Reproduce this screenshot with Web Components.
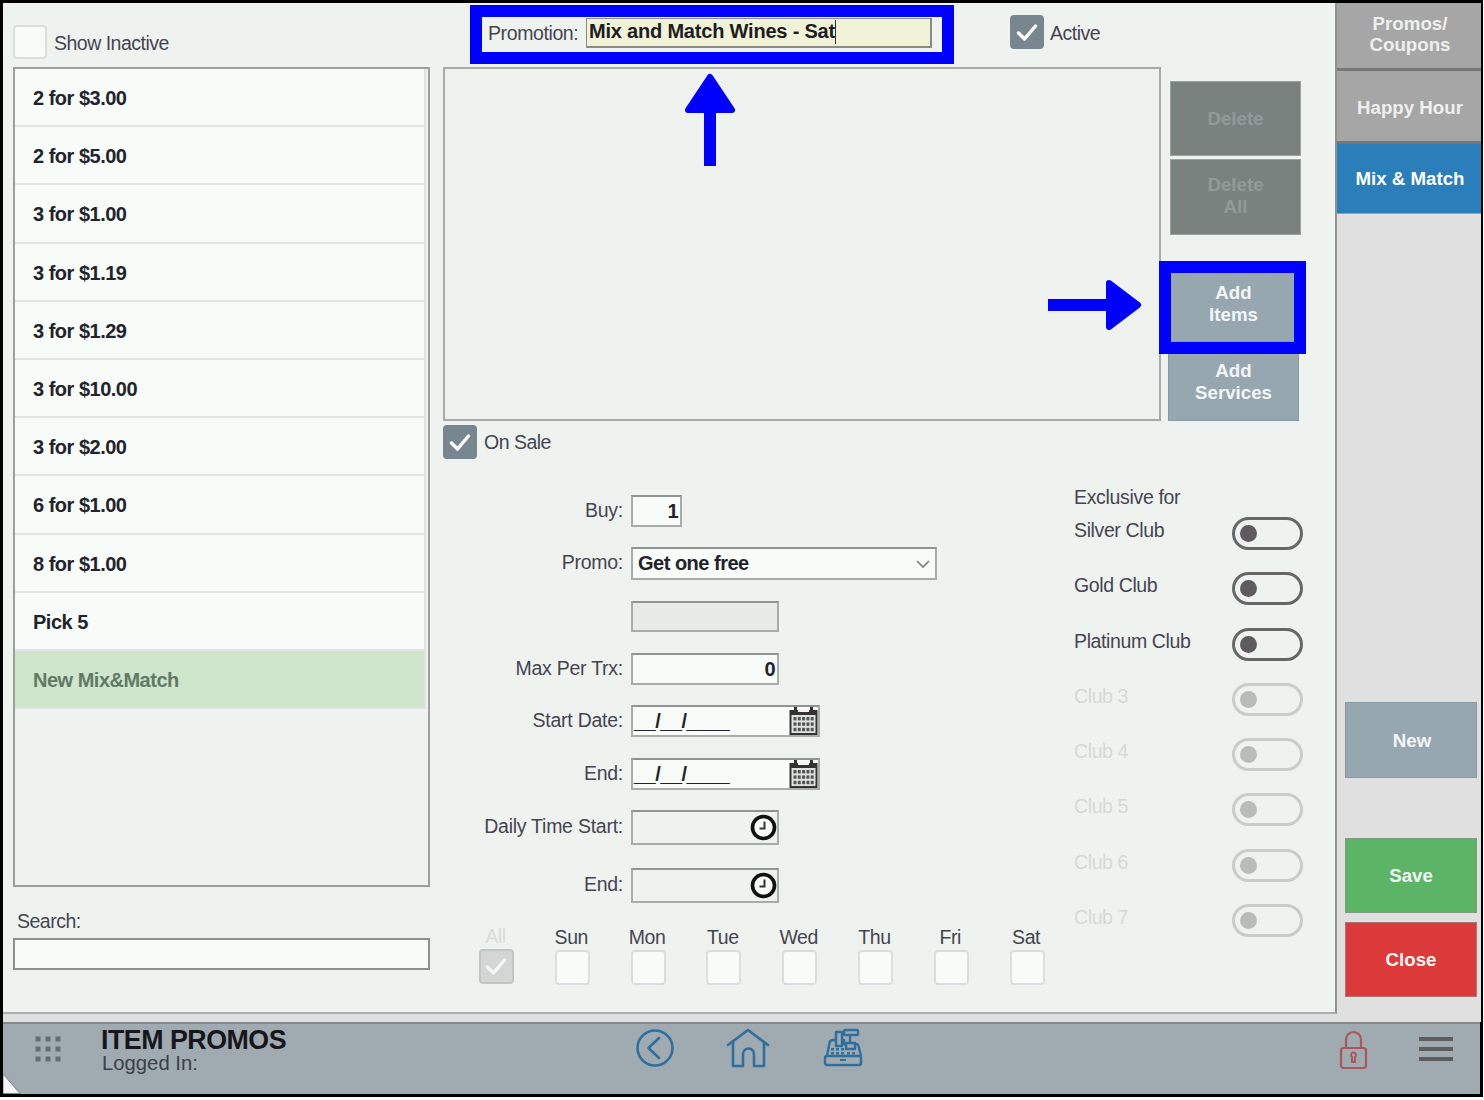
<!DOCTYPE html>
<html><head><meta charset="utf-8"><title>Item Promos</title>
<style>html,body{margin:0;padding:0;background:#fff}</style></head>
<body><promo-app></promo-app>
<script>
const FONT='"Liberation Sans",Arial,sans-serif';
const def=(name,css,html,init)=>customElements.define(name,class extends HTMLElement{
  constructor(){super();this.attachShadow({mode:'open'}).innerHTML='<style>'+css+'</style>'+html;}
  connectedCallback(){if(init)init(this);}
});
const CHECK='<svg viewBox="0 0 34 34" width="34" height="34"><path d="M8.5 18 L14.5 24 L25.5 11" fill="none" stroke="currentColor" stroke-width="3.4" stroke-linecap="round" stroke-linejoin="round"/></svg>';

def('check-box',`:host{display:flex;align-items:center;font:19.5px ${FONT};letter-spacing:-.5px;color:#454550}
 b{display:block;box-sizing:border-box;width:var(--s,34px);height:var(--s,34px);border-radius:4px;background:#f8fcf9;border:2px solid #d9dfdf;flex:none}
 b svg{display:none;margin:-2px}
 :host([on]) b{background:#78878f;border-color:#78878f;color:#fff}
 :host([on]) b svg{display:block}
 :host([muted]) b{background:#d3d6d5;border-color:#c0c5c5;color:#f6f6f6}
 :host([muted]) b svg{display:block}
 span{margin-left:var(--sp,7px);position:relative;top:var(--ty,0)}
 :host([bare]) span{display:none}`,`<b>${CHECK}</b><span><slot></slot></span>`);

def('list-row',`:host{display:flex;align-items:center;box-sizing:border-box;height:58.2px;padding:3px 0 0 18px;border-bottom:2px solid #e2e5e3;background:#f8fcf9;font:bold 20px ${FONT};letter-spacing:-.5px;color:#23232b}
 :host([sel]){background:#cfe5cc;color:#607a66}`,`<slot></slot>`);

def('list-panel',`:host{display:block;box-sizing:border-box;width:417px;height:820px;margin-top:8px;border:2px solid #9c9f9d;padding-right:2px}
 div{border-right:2px solid #dfe2e0}`,`<div><slot></slot></div>`);

def('left-column',`:host{display:flex;flex-direction:column;width:417px;margin-left:10px;padding-top:22px;flex:none}
 label{display:block;margin:24px 0 6px 4px;font:19.5px/21px ${FONT};letter-spacing:-.5px;color:#454550}
 i{display:block;box-sizing:border-box;height:32px;border:2px solid #8c908e;background:#f8fcf9}
 check-box{--ty:1px}`,
 `<check-box>Show Inactive</check-box><list-panel>
 <list-row>2 for $3.00</list-row><list-row>2 for $5.00</list-row><list-row>3 for $1.00</list-row><list-row>3 for $1.19</list-row><list-row>3 for $1.29</list-row><list-row>3 for $10.00</list-row><list-row>3 for $2.00</list-row><list-row>6 for $1.00</list-row><list-row>8 for $1.00</list-row><list-row>Pick 5</list-row><list-row sel>New Mix&amp;Match</list-row>
 </list-panel><label>Search:</label><i></i>`);

def('promo-header',`:host{display:flex;height:64px;padding-top:15px;box-sizing:border-box;font:19.5px ${FONT};color:#454550}
 .lab{width:98px;margin-left:45px;height:30px;line-height:31px;flex:none;letter-spacing:-.4px}
 .inp{box-sizing:border-box;width:346px;height:30px;background:#f0f3d8;border:1px solid #8a8c80;border-bottom-width:2px;border-right-width:2px;font:bold 20px/24px ${FONT};letter-spacing:-.2px;color:#1d1d22;padding-left:2px;flex:none}
 .inp u{display:inline-block;width:1.5px;height:24px;background:#333;vertical-align:-6px}
 check-box{margin:-3px 0 0 78px;height:34px;--ty:1px;--sp:6px}`,
 `<span class="lab">Promotion:</span><span class="inp">Mix and Match Wines - Sat<u></u></span><check-box on>Active</check-box>`);

def('soft-button',`:host{display:flex;align-items:center;justify-content:center;box-sizing:border-box;text-align:center;width:var(--w,131px);height:var(--h,75px);background:var(--bg,#97a7af);border:1px solid var(--bd,#8a9aa2);color:var(--fg,#f3f6f6);font:bold 18.7px/22px ${FONT};padding-bottom:var(--pb,0)}`,`<div><slot></slot></div>`);

def('item-area',`:host{display:flex;height:354px}
 .box{box-sizing:border-box;width:718px;height:354px;border:2px solid #a9aba9;flex:none}
 .btns{display:flex;flex-direction:column;margin-left:7px;padding-top:14px}
 .del{--bg:#7a8280;--bd:#9ea3a1;--fg:#929a98;margin-left:2px;margin-bottom:3px;height:75px}
 .d2{height:76px;--pb:2px}
 .add{margin-top:30px;height:77px;--pb:0px}
 .svc{margin-top:4px;height:75px;--pb:3px}`,
 `<div class="box"></div><div class="btns"><soft-button class="del">Delete</soft-button><soft-button class="del d2" style="margin-bottom:0">Delete<br>All</soft-button><soft-button class="add">Add<br>Items</soft-button><soft-button class="svc">Add<br>Services</soft-button></div>`);

def('form-row',`:host{display:flex;height:var(--h,32px);margin-bottom:var(--g,21px);font:19.5px ${FONT};letter-spacing:-.25px;color:#454550}
 .l{width:180px;text-align:right;flex:none;line-height:var(--h,32px);margin-top:-1px}
 .f{margin-left:8px;position:relative}`,`<div class="l"><slot name="label"></slot></div><div class="f"><slot></slot></div>`);

def('field-box',`:host{display:flex;align-items:center;box-sizing:border-box;height:100%;width:var(--w,148px);border:2px solid #a8acaa;border-top-color:#8f9391;background:var(--bg,#f8fcf9);font:bold 20px ${FONT};letter-spacing:-.5px;color:#23232b;padding:0 4px 0 5px}
 :host([num]){justify-content:flex-end;padding-right:2px}
 :host([icon]){justify-content:space-between;padding:0 0 0 1px}`,`<slot></slot>`);

const dots=()=>{let s='';for(let r=0;r<3;r++)for(let c=0;c<5;c++)s+=`<rect x="${4.5+c*4.3}" y="${10+r*5.4}" width="3" height="3.4"/>`;return s;};
def('cal-icon',`:host{display:block;flex:none;width:29px;height:28px}svg{display:block}`,
 `<svg viewBox="0 0 29 28" width="29" height="28"><rect x="0.5" y="3" width="28" height="25" fill="#333"/><rect x="5" y="0" width="3" height="6" fill="#333"/><rect x="21" y="0" width="3" height="6" fill="#333"/><rect x="9" y="2" width="11" height="3" fill="#f5f5f5"/><rect x="2.5" y="8" width="24" height="18" fill="#dfe2e1"/><g fill="#555">${dots()}</g></svg>`);

def('clock-icon',`:host{display:block;flex:none;width:27px;height:27px}svg{display:block}`,
 `<svg viewBox="0 0 27 27" width="27" height="27"><circle cx="13.5" cy="13.5" r="11" fill="#f8fbf8" stroke="#111" stroke-width="3.6"/><path d="M14.5 7.5V14.5H9.500" fill="none" stroke="#333" stroke-width="2"/></svg>`);

def('day-check',`:host{display:flex;flex-direction:column;align-items:center;width:35px;font:19.5px/21px ${FONT};letter-spacing:-.4px;color:#454550}
 span{height:21px;margin-bottom:3px;white-space:nowrap;position:relative;top:1px;left:-1px}
 :host([muted]) span{color:#d8dbd9}
 check-box{--s:35px}`,`<span><slot></slot></span><check-box bare></check-box>`,
 el=>{if(el.hasAttribute('muted'))el.shadowRoot.querySelector('check-box').setAttribute('muted','');});

def('club-toggle',`:host{display:flex;justify-content:space-between;height:33px;margin-bottom:22.3px;font:19.5px/26px ${FONT};letter-spacing:-.38px;color:#454550}
 b{display:block;box-sizing:border-box;width:71px;height:33px;border:3px solid #676767;border-radius:17px;position:relative;flex:none}
 b::after{content:"";display:block;width:17px;height:17px;border-radius:50%;background:#5e5a60;margin:5px 0 0 5px}
 :host([off]){color:#d6d9d7}
 :host([off]) b{border-color:#c9cdca}
 :host([off]) b::after{background:#b9bdba}`,`<span><slot></slot></span><b></b>`);

def('club-list',`:host{display:block;width:229px;padding-top:28px;font:19.5px/21px ${FONT};letter-spacing:-.33px;color:#454550;flex:none}
 div{height:30px}`,`<div>Exclusive for</div><club-toggle>Silver Club</club-toggle><club-toggle>Gold Club</club-toggle><club-toggle>Platinum Club</club-toggle><club-toggle off>Club 3</club-toggle><club-toggle off>Club 4</club-toggle><club-toggle off>Club 5</club-toggle><club-toggle off>Club 6</club-toggle><club-toggle off>Club 7</club-toggle>`);

const DATE='<span style="font:18.5px '+FONT+';letter-spacing:-.2px;color:#333;margin-left:-1px">__/__/____</span><cal-icon></cal-icon>';
def('promo-form',`:host{display:flex}
 .form{width:631px;flex:none;padding-top:36px}
 .sel{justify-content:space-between}
 .days{display:flex;gap:40.8px;margin:1px 0 0 36px}
 day-check[muted]{margin-top:-1px}`,
 `<div class="form">
 <form-row style="--h:32px;--g:20px"><span slot="label">Buy:</span><field-box num style="--w:51px">1</field-box></form-row>
 <form-row style="--h:33px;--g:21px"><span slot="label">Promo:</span><field-box class="sel" style="--w:306px">Get one free<svg width="14" height="8" viewBox="0 0 14 8" style="margin-right:1px"><path d="M1 1L7 7L13 1" fill="none" stroke="#777" stroke-width="1.6"/></svg></field-box></form-row>
 <form-row style="--h:31px;--g:21px"><span slot="label"></span><field-box style="--bg:#e7ebe8"></field-box></form-row>
 <form-row style="--h:32px;--g:20px"><span slot="label">Max Per Trx:</span><field-box num>0</field-box></form-row>
 <form-row style="--h:32px;--g:21px"><span slot="label">Start Date:</span><field-box icon style="--w:189px">${DATE}</field-box></form-row>
 <form-row style="--h:32px;--g:20px"><span slot="label">End:</span><field-box icon style="--w:189px">${DATE}</field-box></form-row>
 <form-row style="--h:35px;--g:23px"><span slot="label">Daily Time Start:</span><field-box icon style="--bg:transparent"><i></i><clock-icon></clock-icon></field-box></form-row>
 <form-row style="--h:35px;--g:23px"><span slot="label">End:</span><field-box icon style="--bg:transparent"><i></i><clock-icon></clock-icon></field-box></form-row>
 <div class="days"><day-check muted>All</day-check><day-check>Sun</day-check><day-check>Mon</day-check><day-check>Tue</day-check><day-check>Wed</day-check><day-check>Thu</day-check><day-check>Fri</day-check><day-check>Sat</day-check></div>
 </div><club-list></club-list>`);

def('middle-column',`:host{display:block;margin-left:13px;width:890px;flex:none}
 .sale{margin-top:4px}`,`<promo-header></promo-header><item-area></item-area><check-box class="sale" on>On Sale</check-box><promo-form></promo-form>`);

def('side-tab',`:host{display:flex;align-items:center;justify-content:center;box-sizing:border-box;text-align:center;height:var(--h);background:#a6a6a6;border-bottom:3px solid #777;color:#eef0ee;font:bold 18.7px/21px ${FONT};padding:var(--pt,0) 0 var(--pb,0) 2px}
 :host([sel]){background:#2a7fba;border-bottom:1px solid #8aa;color:#fff}`,`<div><slot></slot></div>`);

def('promo-sidebar',`:host{display:flex;flex-direction:column;width:144px;flex:none;background:#e0e0e0}
 .bot{margin:auto 4px 25px 8px}
 soft-button{--w:132px}
 .new{margin-bottom:60px;height:76px;--h:76px;padding-left:2px;padding-top:2px}
 .save{--bg:#5cb467;--bd:#7f9c84;margin-bottom:9px}
 .close{--bg:#dc3a3a;--bd:#a77}`,
 `<side-tab style="--h:68px;--pb:4px">Promos/<br>Coupons</side-tab><side-tab style="--h:73px;--pt:2px">Happy Hour</side-tab><side-tab sel style="--h:70px">Mix &amp; Match</side-tab>
 <div class="bot"><soft-button class="new">New</soft-button><soft-button class="save">Save</soft-button><soft-button class="close">Close</soft-button></div>`);

def('foot-bar',`:host{display:flex;align-items:flex-start;position:relative;box-sizing:border-box;height:72px;background:#9fabb0;border-top:2px solid #85898a;overflow:hidden}
 svg{display:block;flex:none}
 .t{margin:4px 0 0 39px;width:533px;flex:none}
 .t b{display:block;font:bold 26.8px/24px ${FONT};letter-spacing:-.5px;color:#16161c;white-space:nowrap}
 .t span{display:block;font:20.3px/22px ${FONT};color:#3b3f48;margin:0 0 0 1px}
 .corner{position:absolute;left:0;bottom:0}`,
 `<svg style="margin:12px 0 0 32px" width="27" height="27" viewBox="0 0 27 27" fill="#626e74"><rect x="0.5" y="0.5" width="5" height="5"/><rect x="10.5" y="0.5" width="5" height="5"/><rect x="20.5" y="0.5" width="5" height="5"/><rect x="0.5" y="10.5" width="5" height="5"/><rect x="10.5" y="10.5" width="5" height="5"/><rect x="20.5" y="10.5" width="5" height="5"/><rect x="0.5" y="20.5" width="5" height="5"/><rect x="10.5" y="20.5" width="5" height="5"/><rect x="20.5" y="20.5" width="5" height="5"/></svg>
 <div class="t"><b>ITEM PROMOS</b><span>Logged In:</span></div>
 <svg style="margin:3px 0 0 0" width="42" height="42" viewBox="0 0 42 42" fill="none" stroke="#2f6f9e" stroke-width="2.6"><circle cx="21" cy="21" r="17.5"/><path d="M25 11L14.5 21L25 31" stroke-linecap="round" stroke-linejoin="round"/></svg>
 <svg style="margin:4px 0 0 50px" width="44" height="40" viewBox="0 0 44 40" fill="none" stroke="#2f6f9e" stroke-width="2.6" stroke-linejoin="round" stroke-linecap="round"><path d="M2 17L22 2L42 17"/><path d="M7 14V38H17V26a5.500 5.500 0 0 1 11 0V38H38V14"/></svg>
 <svg style="margin:4px 0 0 53px" width="40" height="40" viewBox="0 0 40 40" fill="none" stroke="#2f6f9e" stroke-width="2.4" stroke-linejoin="round"><rect x="2" y="28" width="36" height="9" rx="2"/><path d="M4 28L6.500 15Q7 12 10 12H14M18 12H21V16H33Q35 16 35.500 18L38 28"/><rect x="13" y="4" width="6" height="14"/><rect x="21" y="2" width="14" height="5" rx="1"/><path d="M27 7V16"/><rect x="23" y="15" width="9" height="6" fill="#9fabb0"/><g stroke="none" fill="#2f6f9e"><rect x="8" y="20" width="3" height="2.500"/><rect x="13" y="20" width="3" height="2.500"/><rect x="18" y="20" width="3" height="2.500"/><rect x="8" y="24" width="3" height="2.500"/><rect x="13" y="24" width="3" height="2.500"/><rect x="18" y="24" width="3" height="2.500"/><rect x="24" y="24" width="3" height="2.500"/><rect x="29" y="24" width="3" height="2.500"/><rect x="17" y="31" width="6" height="2"/></g></svg>
 <svg style="margin:6px 0 0 476px" width="30" height="40" viewBox="0 0 30 40" fill="none" stroke="#a8585c" stroke-width="2.200"><rect x="2" y="18" width="25" height="20" rx="2.500"/><path d="M7 18V9.500a7.500 7.500 0 0 1 15 0V18"/><path d="M13 27a2.500 2.500 0 1 1 3 0V32H13Z" stroke-width="2"/></svg>
 <svg style="margin:13px 0 0 50px" width="34" height="26" viewBox="0 0 34 26" fill="#5d5d5d"><rect y="0" width="34" height="4"/><rect y="10" width="34" height="4"/><rect y="20" width="34" height="4"/></svg>
 <svg class="corner" width="18" height="20" viewBox="0 0 18 20"><path d="M0 0L17 19.500H0Z" fill="#f4f6f6" stroke="#7f8587" stroke-width="1"/></svg>`);

def('call-out',`:host{display:block;position:absolute;box-sizing:border-box;pointer-events:none}
 svg{display:block}`,`<slot></slot>`);

def('promo-app',`:host{display:block;position:relative;box-sizing:border-box;width:1483px;height:1097px;border:3px solid #000;background:#e0e0e0}
 .main{display:flex;height:1019px}
 .content{display:flex;box-sizing:border-box;width:1334px;height:1011px;flex:none;background:#eff3f0;border-right:2px solid #8f9391;border-bottom:2px solid #a9adab}
 .frame{border:12px solid #0000ff}`,
 `<div class="main"><div class="content"><left-column></left-column><middle-column></middle-column></div><promo-sidebar></promo-sidebar></div><foot-bar></foot-bar>
 <call-out class="frame" style="left:467px;top:2px;width:484px;height:59px"></call-out>
 <call-out class="frame" style="left:1156px;top:258px;width:147px;height:93px"></call-out>
 <call-out style="left:682px;top:70px"><svg width="50" height="93" viewBox="0 0 50 93"><path d="M25 4L47 37H3Z" fill="#0000ff" stroke="#0000ff" stroke-width="6" stroke-linejoin="round"/><rect x="19" y="35" width="12" height="58" fill="#0000ff"/></svg></call-out>
 <call-out style="left:1045px;top:277px"><svg width="94" height="50" viewBox="0 0 94 50"><path d="M61 3L90 25L61 47Z" fill="#0000ff" stroke="#0000ff" stroke-width="6" stroke-linejoin="round"/><rect x="0" y="19" width="62" height="12" fill="#0000ff"/></svg></call-out>`);
</script></body></html>
